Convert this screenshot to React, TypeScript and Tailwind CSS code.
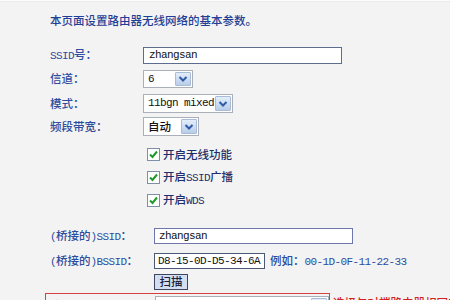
import React from "react";

const A = ({ children }: { children: React.ReactNode }) => (
  <span className="font-['Liberation_Mono',monospace] font-normal text-[11px] tracking-[-0.6px]">{children}</span>
);

const Chevron = () => (
  <svg width="10" height="8" viewBox="0 0 10 8">
    <path d="M1.5 2 L5 5.5 L8.5 2" fill="none" stroke="#2f5aa8" strokeWidth="2" />
  </svg>
);

const Select = ({ w, children }: { w: string; children: React.ReactNode }) => (
  <div className={`${w} h-full flex items-stretch border border-[#a9b0ba] bg-white`}>
    <div className="flex-1 flex items-center pl-[4px] text-[#111]">{children}</div>
    <div className="w-[16px] m-[1px] flex items-center justify-center bg-gradient-to-b from-[#e4eefb] to-[#b9cde9] border border-[#a8bcd8] rounded-[1px]">
      <Chevron />
    </div>
  </div>
);

const Check = ({ children }: { children: React.ReactNode }) => (
  <div className="h-[23px] flex items-center pl-[4px]">
    <div className="w-[13px] h-[13px] border border-[#7f8fa8] bg-white flex items-center justify-center">
      <svg width="11" height="11" viewBox="0 0 11 11">
        <path d="M2 5.5 L4.5 8 L9 2.5" fill="none" stroke="#1f9a2a" strokeWidth="2" />
      </svg>
    </div>
    <span className="ml-[3px] text-[#1d2f6a]">{children}</span>
  </div>
);

export default function App() {
  return (
    <div className="w-[450px] h-[300px] overflow-hidden bg-[#f3f3f3] font-['Noto_Sans_CJK_SC',sans-serif] font-medium text-[11.5px] leading-none">
      <div className="h-[2px] bg-[#fbfbfb] border-b border-[#ececec]" />
      <div className="pl-[50px] pt-[10px]">
        <div className="h-[18px] flex items-center text-[#1f3f96]">本页面设置路由器无线网络的基本参数。</div>

        <div className="mt-[17px] h-[17px] flex items-center">
          <div className="w-[93px] text-[#2c4c9e]"><A>SSID</A>号：</div>
          <div className="w-[199px] h-full border-[1.5px] border-[#5e6d8e] bg-white flex items-center pl-[5px] text-[#111]">
            <A>zhangsan</A>
          </div>
        </div>

        <div className="mt-[6px] h-[18px] flex items-center">
          <div className="w-[93px] text-[#2c4c9e]">信道：</div>
          <Select w="w-[50px]"><A>6</A></Select>
        </div>

        <div className="mt-[6px] h-[19px] flex items-center">
          <div className="w-[93px] text-[#2c4c9e]">模式：</div>
          <Select w="w-[90px]"><A>11bgn mixed</A></Select>
        </div>

        <div className="mt-[4px] h-[19px] flex items-center">
          <div className="w-[93px] text-[#2c4c9e]">频段带宽：</div>
          <Select w="w-[56px]"><span>自动</span></Select>
        </div>

        <div className="mt-[7px] ml-[93px]">
          <Check>开启无线功能</Check>
          <Check>开启<A>SSID</A>广播</Check>
          <Check>开启<A>WDS</A></Check>
        </div>

        <div className="mt-[16px] h-[16px] flex items-center">
          <div className="w-[104px] text-[#2c4c9e]"><A>(</A>桥接的<A>)SSID</A>：</div>
          <div className="w-[199px] h-full border-[1.5px] border-[#6f76ad] bg-white flex items-center pl-[4px] text-[#111]">
            <A>zhangsan</A>
          </div>
        </div>

        <div className="mt-[9px] h-[16px] flex items-center">
          <div className="w-[104px] text-[#2c4c9e]"><A>(</A>桥接的<A>)BSSID</A>：</div>
          <div className="w-[111px] h-full border-[1.5px] border-[#4b5878] bg-white flex items-center pl-[3px] text-[#111]">
            <A>D8-15-0D-D5-34-6A</A>
          </div>
          <div className="ml-[5px] text-[#2c4c9e]">例如：<A>00-1D-0F-11-22-33</A></div>
        </div>

        <div className="mt-[5px] ml-[104px] w-[34px] h-[16px] border border-[#3d4660] bg-[#d3def0] flex items-center justify-center text-[#1a2240]">
          扫描
        </div>

        <div className="mt-[3px] -ml-[5px] flex items-start">
          <div className="w-[286px] h-[20px] border border-[#d84040] flex items-start pl-[5px] pt-[2px]">
            <div className="w-[104px] text-[#2c4c9e] mt-[4px]">密钥类型：</div>
            <div className="h-[18px]">
              <Select w="w-[174px]"><A>WPA-PSK/WPA2-PSK</A></Select>
            </div>
          </div>
          <div className="ml-[3px] mt-[4px] text-[#d42020] whitespace-nowrap">选择与对端路由器相同的加密</div>
        </div>
      </div>
    </div>
  );
}
